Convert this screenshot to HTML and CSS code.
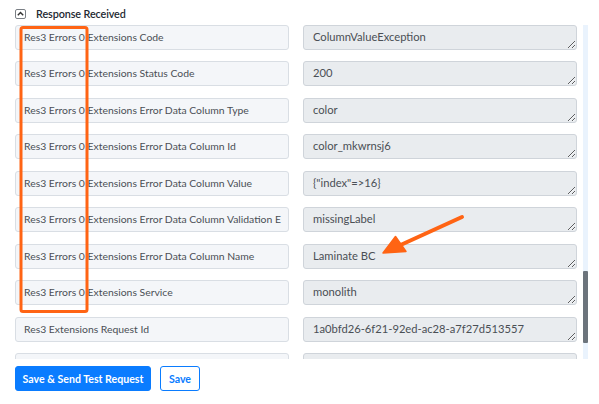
FILE: index.html
```html
<!DOCTYPE html>
<html lang="en">
<head>
<meta charset="utf-8">
<title>Response Received</title>
<link rel="stylesheet" href="styles.css">
</head>
<body>
<div class="panel">
  <div class="section-head">
    <button class="collapse-btn" type="button" aria-label="Collapse">
      <svg width="7" height="5" viewBox="0 0 7 5"><path d="M0.8 4.2 L3.5 1.4 L6.2 4.2" fill="none" stroke="#333" stroke-width="1.4"/></svg>
    </button>
    <span class="section-title">Response Received</span>
  </div>

  <div class="fields-wrap">
    <div class="fields">
      <div class="field-row"><div class="field-label">Res3 Errors 0 Extensions Code</div><textarea class="field-value" readonly>ColumnValueException</textarea></div>
      <div class="field-row"><div class="field-label">Res3 Errors 0 Extensions Status Code</div><textarea class="field-value" readonly>200</textarea></div>
      <div class="field-row"><div class="field-label">Res3 Errors 0 Extensions Error Data Column Type</div><textarea class="field-value" readonly>color</textarea></div>
      <div class="field-row"><div class="field-label">Res3 Errors 0 Extensions Error Data Column Id</div><textarea class="field-value" readonly>color_mkwrnsj6</textarea></div>
      <div class="field-row"><div class="field-label">Res3 Errors 0 Extensions Error Data Column Value</div><textarea class="field-value" readonly>{"index"=>16}</textarea></div>
      <div class="field-row"><div class="field-label">Res3 Errors 0 Extensions Error Data Column Validation E</div><textarea class="field-value" readonly>missingLabel</textarea></div>
      <div class="field-row"><div class="field-label">Res3 Errors 0 Extensions Error Data Column Name</div><textarea class="field-value" readonly>Laminate BC</textarea></div>
      <div class="field-row"><div class="field-label">Res3 Errors 0 Extensions Service</div><textarea class="field-value" readonly>monolith</textarea></div>
      <div class="field-row"><div class="field-label">Res3 Extensions Request Id</div><textarea class="field-value" readonly>1a0bfd26-6f21-92ed-ac28-a7f27d513557</textarea></div>
      <div class="field-row"><div class="field-label"></div><textarea class="field-value" readonly></textarea></div>
    </div>
    <div class="scroll-track"><div class="scroll-thumb"></div></div>
  </div>

  <div class="actions">
    <button class="btn btn-primary" type="button">Save &amp; Send Test Request</button>
    <button class="btn btn-outline" type="button">Save</button>
  </div>

  <!-- callout marking the shared "Res3 Errors 0" prefix and the column name value -->
  <svg class="callout" width="599" height="404" viewBox="0 0 599 404">
    <rect x="21" y="27.5" width="66" height="284" rx="2" fill="none" stroke="#ff6414" stroke-width="3"/>
    <line x1="462" y1="217" x2="394" y2="248" stroke="#ff6414" stroke-width="4" stroke-linecap="round"/>
    <path d="M383 253 L395.5 236.5 L406 251.5 Z" fill="#ff6414" stroke="#ff6414" stroke-width="1.5" stroke-linejoin="round"/>
  </svg>
</div>
</body>
</html>
```

FILE: styles.css
```css
* { box-sizing: border-box; }

html, body {
  margin: 0;
  padding: 0;
  background: #fff;
}

body {
  font-family: "Lato", "Noto Sans", sans-serif;
  color: #495057;
  width: 599px;
  height: 404px;
  overflow: hidden;
}

.panel {
  position: relative;
  width: 599px;
  height: 404px;
}

.section-head {
  display: flex;
  align-items: center;
  gap: 10px;
  height: 24.5px;
  padding-left: 15px;
  padding-top: 3px;
}

.collapse-btn {
  width: 11px;
  height: 10px;
  padding: 0;
  margin: 0;
  border: 1px solid #7a7f85;
  border-radius: 2px;
  background: #fff;
  display: flex;
  align-items: center;
  justify-content: center;
}

.section-title {
  font-size: 10.8px;
  font-weight: 600;
  color: #222831;
  letter-spacing: -0.1px;
}

.fields-wrap {
  position: relative;
  height: 334.5px;
  overflow: hidden;
  padding: 0 22px 0 15px;
}

.fields {
  display: flex;
  flex-direction: column;
  gap: 11.5px;
}

.field-row {
  display: grid;
  grid-template-columns: 274px 274px;
  column-gap: 14px;
  height: 25px;
  flex: none;
}

.field-label {
  height: 25px;
  border: 1px solid #d9dee4;
  border-radius: 3px;
  background: #f4f6f9;
  padding: 0 8px;
  font-size: 10.4px;
  line-height: 22px;
  white-space: nowrap;
  overflow: hidden;
  color: #4a4f55;
}

.field-value {
  display: block;
  width: 274px;
  height: 25px;
  margin: 0;
  border: 1px solid #cfd4da;
  border-radius: 3px;
  background: #e9ecef;
  padding: 3px 8px 0 9px;
  font-family: "Lato", "Noto Sans", sans-serif;
  font-size: 11.2px;
  line-height: 15px;
  color: #4a4f55;
  resize: vertical;
  overflow: hidden;
  outline: none;
}

.scroll-track {
  position: absolute;
  top: 0;
  bottom: 0;
  left: 583px;
  width: 5px;
  background: #eaf3fd;
}

.scroll-thumb {
  position: absolute;
  left: 0;
  right: 0;
  top: 246px;
  height: 72px;
  border-radius: 1px;
  background: #6c747c;
}

.actions {
  display: flex;
  gap: 9px;
  padding: 7px 0 0 15px;
}

.btn {
  height: 25px;
  border-radius: 3px;
  font-family: "Lato", "Noto Sans", sans-serif;
  font-size: 10.6px;
  font-weight: 700;
  padding: 0;
  white-space: nowrap;
  cursor: pointer;
}

.btn-primary {
  width: 136px;
  background: #0a7cff;
  border: 1px solid #0a7cff;
  color: #fff;
}

.btn-outline {
  width: 40px;
  background: #fff;
  border: 1px solid #0a7cff;
  color: #0a7cff;
}

.callout {
  position: absolute;
  left: 0;
  top: 0;
  pointer-events: none;
}
```
